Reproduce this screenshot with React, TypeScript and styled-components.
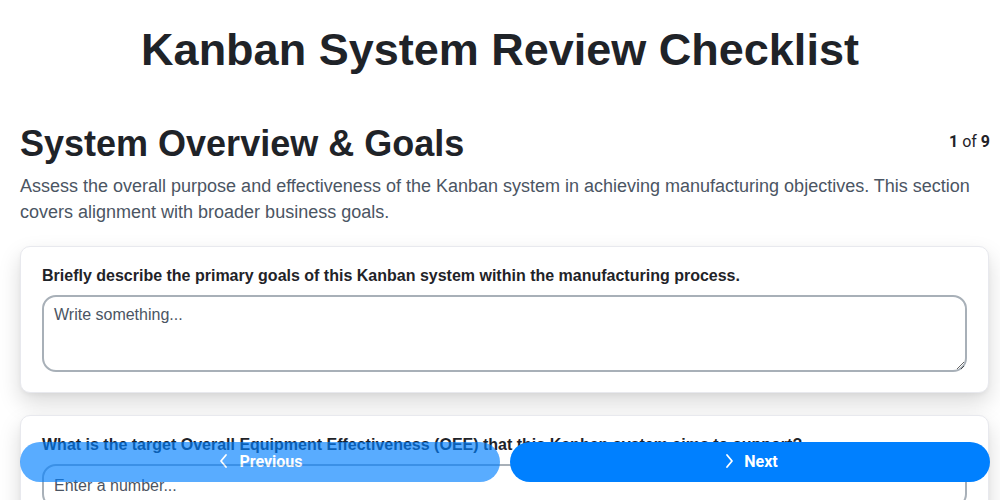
import React from "react";
import styled, { createGlobalStyle } from "styled-components";

const Global = createGlobalStyle`
  html, body { margin: 0; padding: 0; background: #ffffff; overflow: hidden; }
  body { font-family: "Liberation Sans", Arial, sans-serif; color: #1f2328; }
  * { box-sizing: border-box; }
`;

const Page = styled.div`
  padding-bottom: 120px;
`;

const Title = styled.h1`
  margin: 0;
  padding-top: 24px;
  font-size: 45px;
  line-height: 52px;
  font-weight: 700;
  text-align: center;
  color: #1f2328;
`;

const Main = styled.main`
  padding: 0 10px 0 20px;
`;

const SectionHeader = styled.div`
  display: flex;
  justify-content: space-between;
  align-items: flex-start;
  margin-top: 46px;
`;

const SectionTitle = styled.h2`
  margin: 0;
  font-size: 36px;
  line-height: 44px;
  font-weight: 700;
  color: #1f2328;
`;

const Counter = styled.div`
  font-family: Roboto, "Noto Sans", sans-serif;
  font-size: 16px;
  color: #1f2328;
  margin-top: 10px;
  b { font-weight: 700; }
`;

const Description = styled.p`
  margin: 7px 0 21px;
  font-size: 18px;
  line-height: 26px;
  color: #4b5563;
`;

const Cards = styled.div`
  display: flex;
  flex-direction: column;
  gap: 22px;
`;

const Card = styled.div`
  background: #fff;
  border: 1px solid #e8e9ee;
  border-radius: 10px;
  padding: 20px 21px;
  margin-right: 1px;
  box-shadow: 0 10px 22px rgba(0, 0, 0, 0.15), 0 2px 4px rgba(0, 0, 0, 0.04);
`;

const Label = styled.label`
  display: block;
  font-size: 16px;
  line-height: 18px;
  font-weight: 700;
  color: #1f2328;
  margin-bottom: 10px;
`;

const TextArea = styled.textarea`
  display: block;
  width: 100%;
  height: 77px;
  border: 2px solid #a8b0b8;
  border-radius: 14px;
  padding: 9px 10px;
  font-family: "Liberation Sans", Arial, sans-serif;
  font-size: 16px;
  color: #1f2328;
  resize: vertical;
  outline: none;
  &::placeholder { color: #4b5563; }
`;

const Input = styled.input`
  display: block;
  width: 100%;
  height: 44px;
  border: 2px solid #a8b0b8;
  border-radius: 14px;
  padding: 0 10px;
  font-family: "Liberation Sans", Arial, sans-serif;
  font-size: 16px;
  outline: none;
  &::placeholder { color: #4b5563; }
`;

const Nav = styled.div`
  position: fixed;
  left: 20px;
  right: 10px;
  bottom: 18px;
  display: grid;
  grid-template-columns: 1fr 1fr;
  gap: 10px;
`;

const NavButton = styled.button<{ $faded?: boolean }>`
  height: 40px;
  padding: 0 0 2px;
  border: none;
  border-radius: 20px;
  background: #0080ff;
  opacity: ${(p) => (p.$faded ? 0.65 : 1)};
  color: #fff;
  font-family: Roboto, "Noto Sans", sans-serif;
  font-weight: 700;
  font-size: 16px;
  display: flex;
  align-items: center;
  justify-content: center;
  gap: 8px;
  cursor: pointer;
`;

const Chevron = ({ dir }: { dir: "left" | "right" }) => (
  <svg width="14" height="16" viewBox="0 0 14 16" fill="none" stroke="#fff" strokeWidth="1.8" strokeLinecap="round" strokeLinejoin="round">
    {dir === "left" ? <path d="M9 2 L4 8 L9 14" /> : <path d="M5 2 L10 8 L5 14" />}
  </svg>
);

export default function App() {
  return (
    <>
      <Global />
      <Page>
        <Title>Kanban System Review Checklist</Title>
        <Main>
          <SectionHeader>
            <SectionTitle>System Overview &amp; Goals</SectionTitle>
            <Counter>
              <b>1</b> of <b>9</b>
            </Counter>
          </SectionHeader>
          <Description>
            Assess the overall purpose and effectiveness of the Kanban system in achieving manufacturing objectives. This
            section covers alignment with broader business goals.
          </Description>
          <Cards>
            <Card>
              <Label>Briefly describe the primary goals of this Kanban system within the manufacturing process.</Label>
              <TextArea placeholder="Write something..." />
            </Card>
            <Card>
              <Label>What is the target Overall Equipment Effectiveness (OEE) that this Kanban system aims to support?</Label>
              <Input type="number" placeholder="Enter a number..." />
            </Card>
          </Cards>
        </Main>
      </Page>
      <Nav>
        <NavButton $faded>
          <Chevron dir="left" />
          Previous
        </NavButton>
        <NavButton>
          <Chevron dir="right" />
          Next
        </NavButton>
      </Nav>
    </>
  );
}
